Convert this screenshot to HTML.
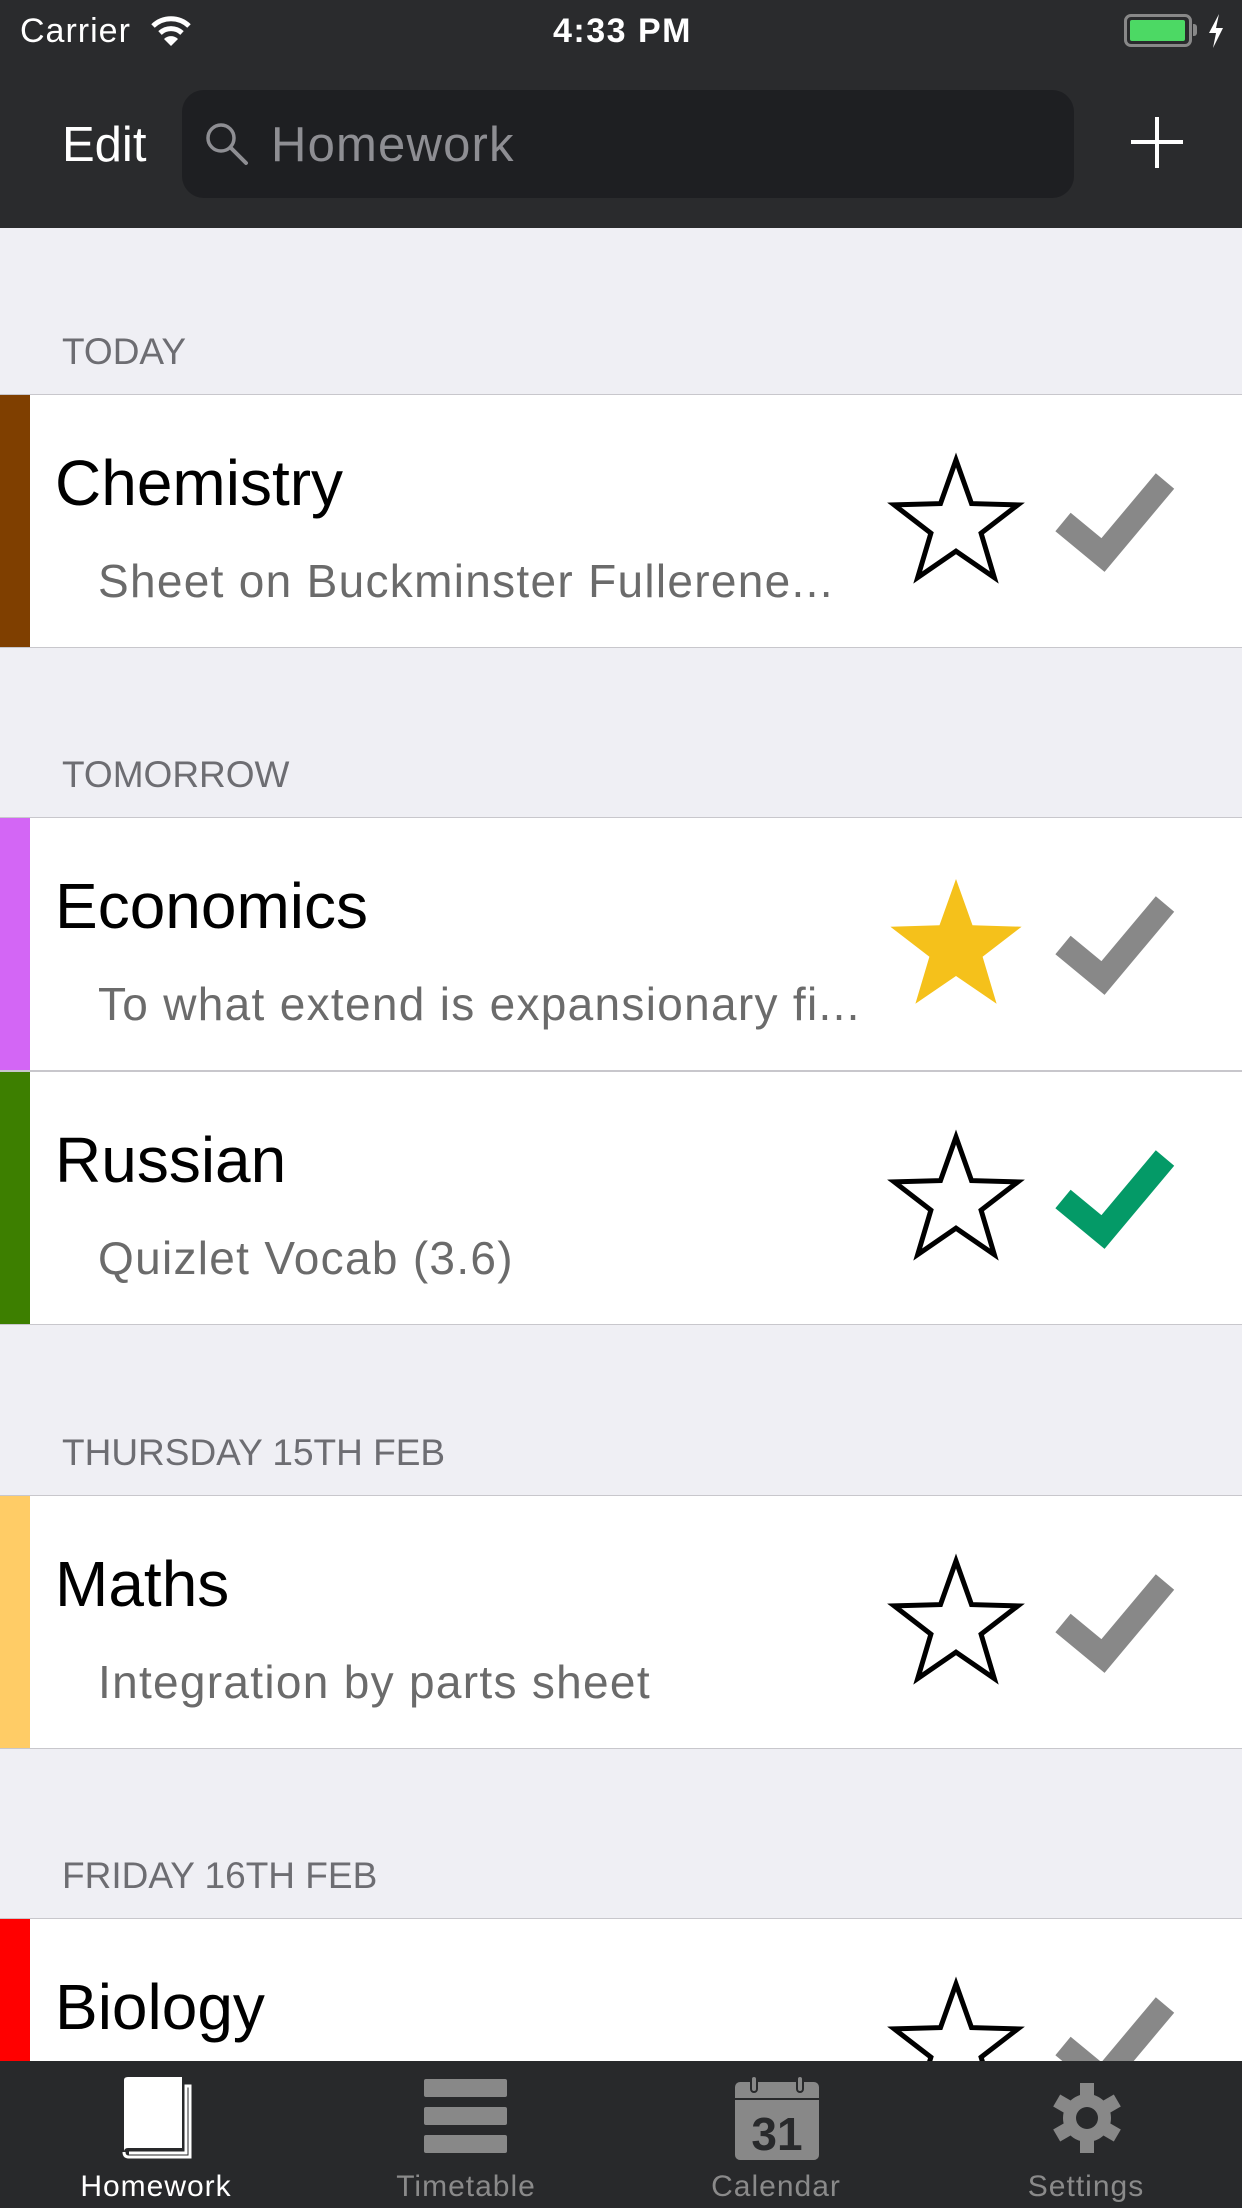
<!DOCTYPE html>
<html><head><meta charset="utf-8"><style>
*{margin:0;padding:0;box-sizing:border-box}
body{width:1242px;height:2208px;position:relative;overflow:hidden;background:#efeff4;font-family:"Liberation Sans",sans-serif}
.a{position:absolute;white-space:nowrap;line-height:1}
.row{position:absolute;left:0;width:1242px;height:254px;background:#fff;border-top:1.5px solid #c8c7cc;border-bottom:1.5px solid #c8c7cc}
.bar{position:absolute;left:0;top:0;width:30px;height:100%}
.t{position:absolute;left:55px;top:56px;font-size:64px;line-height:1;color:#000}
.s{position:absolute;left:98px;top:163px;font-size:46px;line-height:1;color:#6b6b6b;letter-spacing:1.3px}
.h{position:absolute;left:62px;font-size:37px;line-height:1;color:#6d6d72}
svg.ic{position:absolute;left:0;top:0}
.tab{position:absolute;top:2172px;font-size:30px;line-height:1;color:#8a8a8a;transform:translateX(-50%);letter-spacing:1px}
</style></head><body>
<div class="a" style="left:0;top:0;width:1242px;height:228px;background:#2a2b2d"></div>
<div class="a" style="left:20px;top:14px;font-size:34px;color:#fff;letter-spacing:1px">Carrier</div>
<svg class="a" style="left:150px;top:14px" width="42" height="34" viewBox="0 0 42 34"><path d="M3 12 A26 26 0 0 1 39 12" stroke="#fff" stroke-width="5" fill="none"/><path d="M10 19 A16 16 0 0 1 32 19" stroke="#fff" stroke-width="5" fill="none"/><path d="M21 32 L14 25 A10 10 0 0 1 28 25 Z" fill="#fff"/></svg>
<div class="a" style="left:553px;top:14px;font-size:34px;color:#fff;font-weight:bold;letter-spacing:1.5px">4:33 PM</div>
<div class="a" style="left:1124px;top:14px;width:68px;height:33px;border:3px solid #888;border-radius:7px"><div style="position:absolute;left:3px;top:3px;width:55px;height:21px;background:#4cd964;border-radius:2px"></div></div>
<div class="a" style="left:1193px;top:24px;width:4px;height:12px;background:#888;border-radius:0 3px 3px 0"></div>
<svg class="a" style="left:1206px;top:14px" width="20" height="34" viewBox="0 0 20 34"><path d="M13 0 L3 19 L10 19 L7 34 L17 14 L10 14 Z" fill="#fff"/></svg>
<div class="a" style="left:62px;top:121px;font-size:49px;color:#fff">Edit</div>
<div class="a" style="left:182px;top:90px;width:892px;height:108px;background:#1e1f22;border-radius:22px"></div>
<svg class="a" style="left:204px;top:121px" width="46" height="46" viewBox="0 0 46 46"><circle cx="17" cy="17" r="13" stroke="#8e8e93" stroke-width="3.5" fill="none"/><path d="M27 27 L42 42" stroke="#8e8e93" stroke-width="4" stroke-linecap="round"/></svg>
<div class="a" style="left:271px;top:121px;font-size:49px;color:#8e8e93;letter-spacing:1.2px">Homework</div>
<div class="a" style="left:1131px;top:140px;width:52px;height:4px;background:#fff"></div>
<div class="a" style="left:1155px;top:117px;width:4px;height:51px;background:#fff"></div>

<div class="h" style="top:333px">TODAY</div>
<div class="h" style="top:756px">TOMORROW</div>
<div class="h" style="top:1434px">THURSDAY 15TH FEB</div>
<div class="h" style="top:1857px">FRIDAY 16TH FEB</div>

<svg width="0" height="0" style="position:absolute"><defs>
<polygon id="so" points="956,65 971.5,108.6 1017.8,109.9 981.1,138.2 994.3,182.6 956,156.2 917.7,182.6 930.9,138.2 894.2,109.9 940.5,108.6" fill="none" stroke="#000" stroke-width="5"/>
</defs></svg>

<div class="row" style="top:394px"><div class="bar" style="background:#7f3f00"></div><div class="t">Chemistry</div><div class="s">Sheet on Buckminster Fullerene...</div>
<svg class="ic" width="1242" height="254"><use href="#so"/><polyline points="1063,127 1103,160 1165,86" fill="none" stroke="#888" stroke-width="24"/></svg></div>

<div class="row" style="top:817px"><div class="bar" style="background:#d366f5"></div><div class="t">Economics</div><div class="s">To what extend is expansionary fi...</div>
<svg class="ic" width="1242" height="254"><polygon points="956,61 972.5,107.3 1021.6,108.7 982.6,138.7 996.6,185.8 956,158 915.4,185.8 929.4,138.7 890.4,108.7 939.5,107.3" fill="#f5c11b"/><polyline points="1063,127 1103,160 1165,86" fill="none" stroke="#888" stroke-width="24"/></svg></div>

<div class="row" style="top:1071px"><div class="bar" style="background:#3d7f00"></div><div class="t">Russian</div><div class="s">Quizlet Vocab (3.6)</div>
<svg class="ic" width="1242" height="254"><use href="#so"/><polyline points="1063,127 1103,160 1165,86" fill="none" stroke="#049a67" stroke-width="24"/></svg></div>

<div class="row" style="top:1495px"><div class="bar" style="background:#ffcc66"></div><div class="t">Maths</div><div class="s">Integration by parts sheet</div>
<svg class="ic" width="1242" height="254"><use href="#so"/><polyline points="1063,127 1103,160 1165,86" fill="none" stroke="#888" stroke-width="24"/></svg></div>

<div class="row" style="top:1918px"><div class="bar" style="background:#ff0000"></div><div class="t">Biology</div>
<svg class="ic" width="1242" height="254"><use href="#so"/><polyline points="1063,127 1103,160 1165,86" fill="none" stroke="#888" stroke-width="24"/></svg></div>

<div class="a" style="left:0;top:2061px;width:1242px;height:147px;background:#28292b"></div>
<svg class="a" style="left:120px;top:2076px" width="74" height="84" viewBox="0 0 74 84"><path d="M4 4 Q4 1 8 1 L62 1 L62 72 L8 72 Q4 72 4 76 Z" fill="#fff"/><path d="M4 76 Q4 81 9 81 L70 81 L70 10 L66 10 L66 77 L9 77" fill="none" stroke="#fff" stroke-width="3"/></svg>
<div class="a" style="left:424px;top:2079px;width:83px;height:18px;background:#888;border-radius:2px"></div>
<div class="a" style="left:424px;top:2107px;width:83px;height:18px;background:#888;border-radius:2px"></div>
<div class="a" style="left:424px;top:2135px;width:83px;height:18px;background:#888;border-radius:2px"></div>
<svg class="a" style="left:735px;top:2076px" width="84" height="84" viewBox="0 0 84 84"><rect x="0" y="6" width="84" height="78" rx="5" fill="#888"/><rect x="0" y="22" width="84" height="2" fill="#28292b"/><rect x="16" y="0" width="6" height="16" rx="3" fill="#888" stroke="#28292b" stroke-width="2"/><rect x="62" y="0" width="6" height="16" rx="3" fill="#888" stroke="#28292b" stroke-width="2"/><text x="42" y="74" font-family="Liberation Sans" font-size="46" font-weight="bold" fill="#28292b" text-anchor="middle">31</text></svg>
<svg class="a" style="left:1052px;top:2083px" width="70" height="70" viewBox="-35 -35 70 70"><g fill="#888"><circle r="24"/><rect x="-7" y="-35" width="14" height="70"/><rect x="-7" y="-35" width="14" height="70" transform="rotate(60)"/><rect x="-7" y="-35" width="14" height="70" transform="rotate(120)"/></g><circle r="11" fill="#28292b"/></svg>
<div class="tab" style="left:156px;color:#fff">Homework</div>
<div class="tab" style="left:466px">Timetable</div>
<div class="tab" style="left:776px">Calendar</div>
<div class="tab" style="left:1086px">Settings</div>
</body></html>
